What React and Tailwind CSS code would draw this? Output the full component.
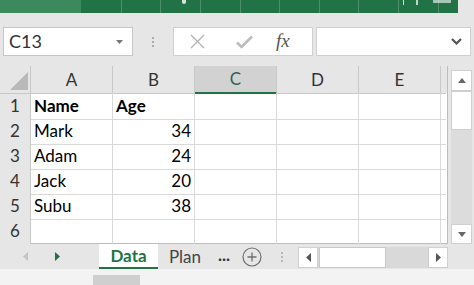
import React from 'react'

const COLS = ['A', 'B', 'C', 'D', 'E']
const ROWS = [
  ['Name', 'Age', true],
  ['Mark', '34'],
  ['Adam', '24'],
  ['Jack', '20'],
  ['Subu', '38'],
  ['', ''],
]

const font = { fontFamily: 'Lato, "Open Sans", sans-serif' }

function RibbonStrip() {
  const lines = [121, 160, 200, 240, 279, 319, 358, 398, 438]
  return (
    <div className="flex h-[13px] w-full">
      <div className="h-full w-[81px] bg-[#3b8a5b]" />
      <div className="relative h-full w-[377px] bg-[#217346]">
        {lines.map((x) => (
          <span key={x} className="absolute top-0 h-full w-px bg-[#4c9169]" style={{ left: x - 81 }} />
        ))}
        <span className="absolute left-[101px] top-0 h-[4px] w-[4px] rounded-b-sm bg-white/80" />
        <span className="absolute left-[322px] top-0 h-[5px] w-px bg-white/80" />
        <span className="absolute left-[335px] top-0 h-[5px] w-[2px] bg-white/70" />
        <span className="absolute left-[352px] top-0 h-[3px] w-[18px] bg-white/60" />
      </div>
      <div className="h-full flex-1 bg-[#e6e6e6]" />
    </div>
  )
}

function FormulaBar() {
  return (
    <div className="flex h-[53px] items-start gap-0 bg-[#e6e6e6] px-[3px] pt-[14px]">
      <div className="flex h-[29px] w-[130px] items-center justify-between border border-[#c6c6c6] bg-white pl-[5px] pr-[9px] text-[18px] text-[#333]">
        <span>C13</span>
        <svg width="7" height="4" viewBox="0 0 7 4"><path d="M0 0h7L3.5 4z" fill="#777" /></svg>
      </div>
      <div className="flex h-[29px] w-[40px] flex-col items-center justify-center gap-[2px]">
        <span className="h-[2px] w-[2px] rounded-full bg-[#999]" />
        <span className="h-[2px] w-[2px] rounded-full bg-[#999]" />
        <span className="h-[2px] w-[2px] rounded-full bg-[#999]" />
      </div>
      <div className="flex h-[29px] w-[140px] items-center border border-[#d0d0d0] bg-white">
        <svg className="ml-[16px]" width="15" height="15" viewBox="0 0 15 15">
          <path d="M1 1l13 13M14 1L1 14" stroke="#b4b4b4" strokeWidth="1.4" />
        </svg>
        <svg className="ml-[31px]" width="17" height="14" viewBox="0 0 17 14">
          <path d="M1 7.5l4.5 4.5L16 1.5" fill="none" stroke="#bcbcbc" strokeWidth="2.6" />
        </svg>
        <span className="ml-[23px] text-[19px] italic text-[#555]" style={{ fontFamily: '"Liberation Serif", serif' }}>fx</span>
      </div>
      <div className="ml-[3px] flex h-[29px] flex-1 items-center justify-end border border-[#d0d0d0] bg-white pr-[8px]">
        <svg width="11" height="7" viewBox="0 0 11 7">
          <path d="M1 1l4.5 4.5L10 1" fill="none" stroke="#555" strokeWidth="2.2" />
        </svg>
      </div>
    </div>
  )
}

function Grid() {
  const cols = 'grid grid-cols-[31px_82px_82px_82px_82px_82px_5px]'
  return (
    <div className="w-[448px] border-r border-b border-[#bdbdbd] bg-white">
      <div className={`${cols} h-[27px] bg-[#e6e6e6] text-[17px] text-[#333]`}>
        <div className="relative border-r border-b border-[#c8c8c8]">
          <svg className="absolute left-[10px] top-[6px]" width="18" height="18" viewBox="0 0 18 18">
            <path d="M18 0V18H0z" fill="#b9b9b9" />
          </svg>
        </div>
        {COLS.map((c) => (
          <div
            key={c}
            className={
              c === 'C'
                ? 'flex items-center justify-center border-r border-[#c8c8c8] border-b-2 border-b-[#217346] bg-[#d2d2d2] text-[#38604a]'
                : 'flex items-center justify-center border-r border-b border-[#c8c8c8]'
            }
          >
            {c}
          </div>
        ))}
        <div className="border-b border-[#c8c8c8]" />
      </div>
      {ROWS.map((r, i) => (
        <div key={i} className={`${cols} h-[25px] text-[17px] text-black`}>
          <div className="flex items-center justify-center border-r border-b border-[#c8c8c8] bg-[#e6e6e6] text-[#333]">
            {i + 1}
          </div>
          <div className={`flex items-center border-r border-b border-[#d9d9d9] pl-[3px] ${r[2] ? 'font-bold' : ''}`}>{r[0]}</div>
          <div className={`flex items-center border-r border-b border-[#d9d9d9] px-[3px] ${r[2] ? 'font-bold' : 'justify-end'}`}>{r[1]}</div>
          <div className="border-r border-b border-[#d9d9d9]" />
          <div className="border-r border-b border-[#d9d9d9]" />
          <div className="border-r border-b border-[#d9d9d9]" />
          <div className="border-b border-[#d9d9d9]" />
        </div>
      ))}
    </div>
  )
}

function VScroll() {
  return (
    <div className="ml-[3px] mt-[4px] flex w-[21px] flex-col bg-[#dcdcdc]">
      <div className="flex h-[21px] items-center justify-center border border-[#d0d0d0] bg-white">
        <svg width="8" height="5" viewBox="0 0 8 5"><path d="M0 5h8L4 0z" fill="#666" /></svg>
      </div>
      <div className="h-[39px] border border-[#cfcfcf] bg-white" />
      <div className="flex-1" />
      <div className="flex h-[20px] items-center justify-center border border-[#d0d0d0] bg-white">
        <svg width="8" height="5" viewBox="0 0 8 5"><path d="M0 0h8L4 5z" fill="#666" /></svg>
      </div>
    </div>
  )
}

function TabBar() {
  return (
    <div className="flex h-[25px] items-stretch bg-[#e6e6e6] text-[17px]">
      <div className="flex w-[99px] items-center">
        <svg className="ml-[23px]" width="5" height="9" viewBox="0 0 5 9"><path d="M5 0v9L0 4.5z" fill="#c4c4c4" /></svg>
        <svg className="ml-[27px]" width="5" height="9" viewBox="0 0 5 9"><path d="M0 0v9l5-4.5z" fill="#217346" /></svg>
      </div>
      <div className="flex w-[59px] items-center justify-center border-b-2 border-[#217346] bg-white font-bold text-[#217346]">
        Data
      </div>
      <div className="flex w-[54px] items-center justify-center text-[#444]">Plan</div>
      <div className="flex w-[24px] items-center justify-center pb-[4px] font-bold text-[#333]">...</div>
      <div className="flex w-[32px] items-center justify-center">
        <svg width="20" height="20" viewBox="0 0 20 20">
          <circle cx="10" cy="10" r="9" fill="none" stroke="#6f6f6f" strokeWidth="1.2" />
          <path d="M10 5.5v9M5.5 10h9" stroke="#6f6f6f" strokeWidth="1.3" />
        </svg>
      </div>
      <div className="ml-[8px] flex w-[12px] flex-col items-center justify-center gap-[2px]">
        <span className="h-[2px] w-[2px] rounded-full bg-[#aaa]" />
        <span className="h-[2px] w-[2px] rounded-full bg-[#aaa]" />
        <span className="h-[2px] w-[2px] rounded-full bg-[#aaa]" />
      </div>
      <div className="ml-[10px] mt-[3px] flex h-[21px] w-[150px] bg-[#d9d9d9]">
        <div className="flex w-[20px] items-center justify-center border border-[#d0d0d0] bg-white">
          <svg width="5" height="9" viewBox="0 0 5 9"><path d="M5 0v9L0 4.5z" fill="#555" /></svg>
        </div>
        <div className="ml-[1px] w-[67px] border border-[#c8c8c8] bg-white" />
        <div className="flex-1" />
        <div className="flex w-[20px] items-center justify-center border border-[#d0d0d0] bg-white">
          <svg width="5" height="9" viewBox="0 0 5 9"><path d="M0 0v9l5-4.5z" fill="#555" /></svg>
        </div>
      </div>
      <div className="flex-1" />
    </div>
  )
}

export default function App() {
  return (
    <div className="flex h-[285px] w-[474px] flex-col overflow-hidden bg-[#e6e6e6]" style={font}>
      <RibbonStrip />
      <FormulaBar />
      <div className="flex">
        <Grid />
        <VScroll />
      </div>
      <TabBar />
      <div className="relative flex-1 bg-[#f3f3f3]">
        <div className="absolute bottom-0 left-[93px] h-[10px] w-[47px] bg-[#cfcfcf]" />
      </div>
    </div>
  )
}
